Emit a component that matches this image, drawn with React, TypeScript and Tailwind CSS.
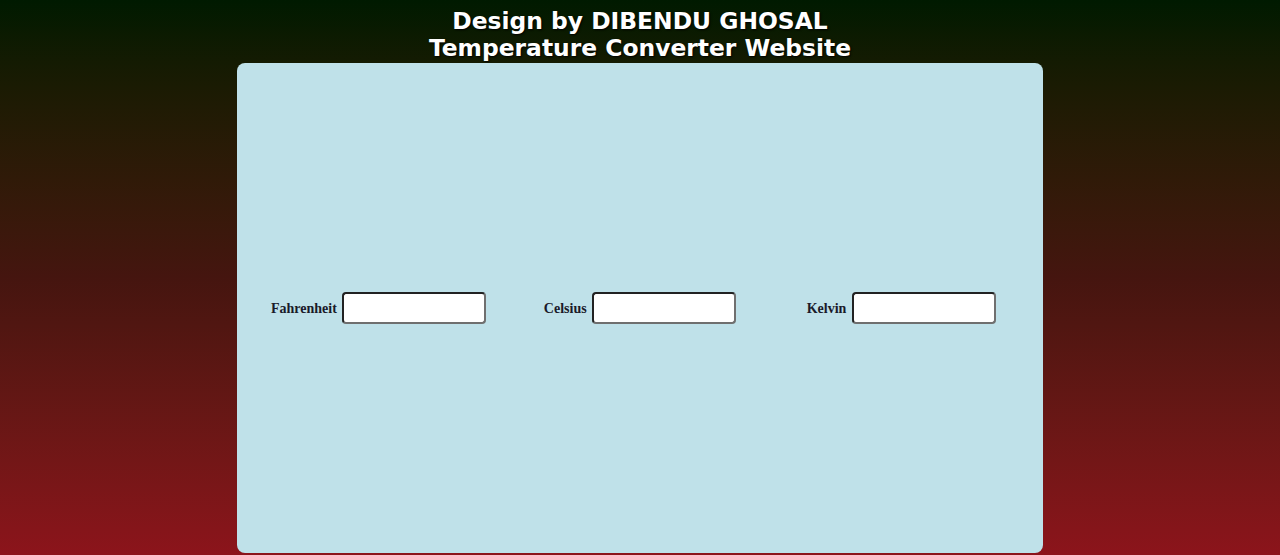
export default function App() {
  return (
    <div className="h-[555px] overflow-hidden bg-gradient-to-b from-[#001a00] via-[#45150f] to-[#8c141b] flex flex-col items-center">
      <h1 className="pt-[8px] mb-[1px] text-center text-white font-bold text-[23.4px] leading-[27px] font-['DejaVu_Sans',Verdana,sans-serif] [text-shadow:1px_1px_2px_#000]">
        Design by DIBENDU GHOSAL
        <br />
        Temperature Converter Website
      </h1>

      <div className="w-[806px] h-[490px] rounded-[8px] bg-[#bfe1e9] flex items-center font-['Liberation_Serif','Times_New_Roman',serif]">
        <Field label="Fahrenheit" className="ml-[34px]" />
        <Field label="Celsius" className="ml-[58px]" />
        <Field label="Kelvin" className="ml-[71px] gap-[6px]" />
      </div>
    </div>
  );
}

function Field({ label, className }: { label: string; className?: string }) {
  return (
    <div className={`flex items-center gap-[5px] ${className ?? ''}`}>
      <label className="text-[14px] font-bold text-[#1a1a2a]">{label}</label>
      <input
        type="text"
        className="w-[144px] h-[32px] bg-white border-2 border-t-[#222] border-l-[#222] border-r-[#6f6f6f] border-b-[#6f6f6f] rounded-[4px] outline-none px-1"
      />
    </div>
  );
}
